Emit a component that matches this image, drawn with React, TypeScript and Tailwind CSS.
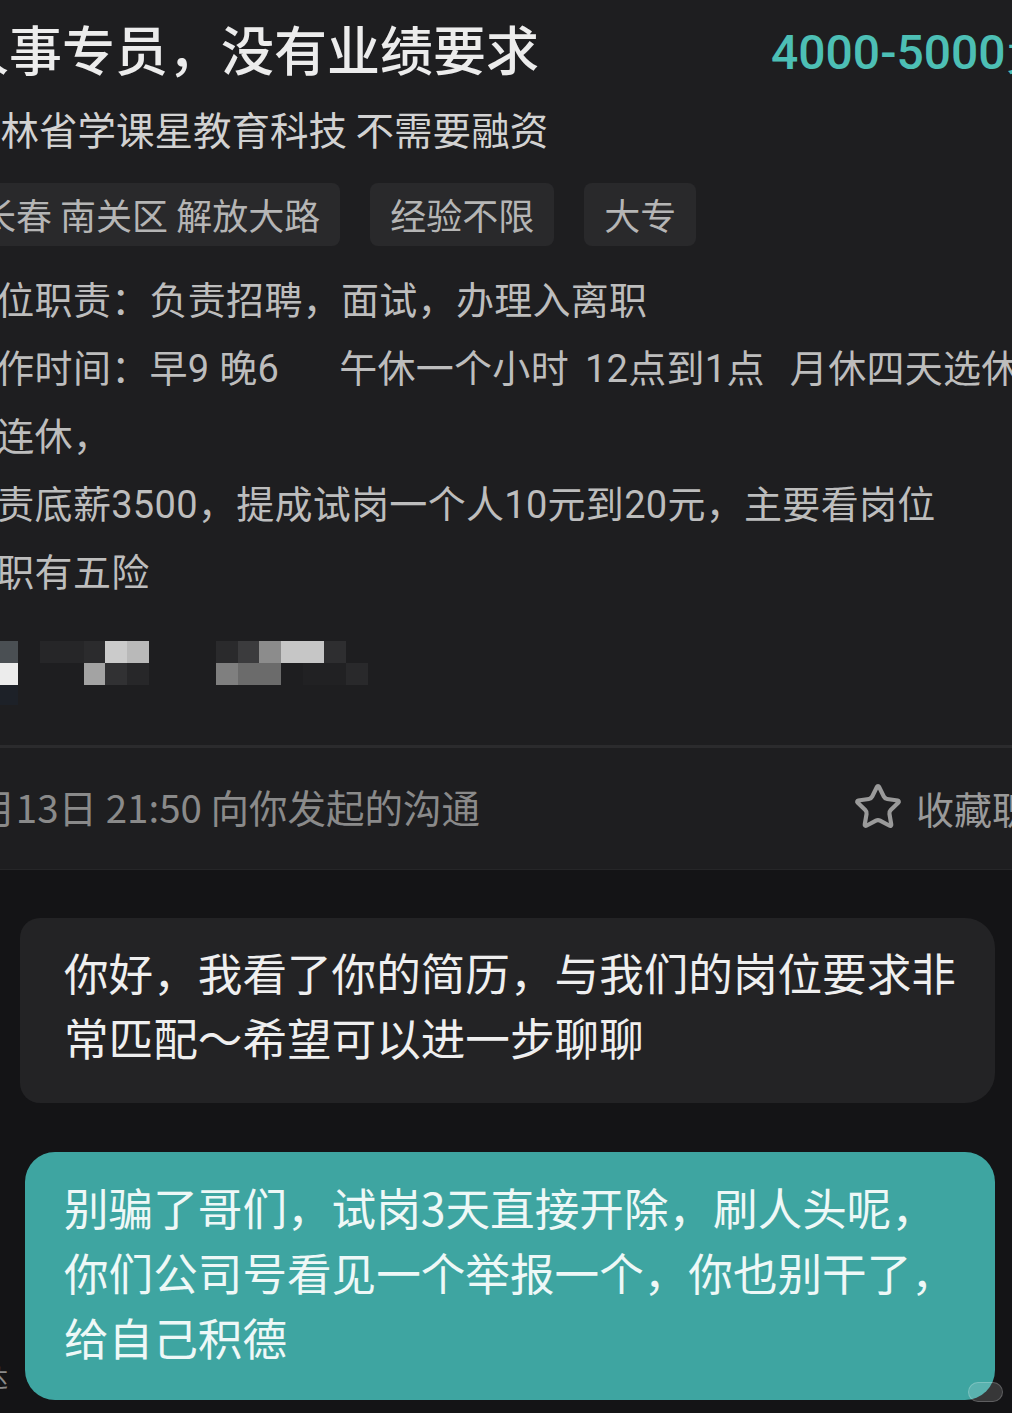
import { Star } from "lucide-react";

const cjk = "font-['Noto_Sans_CJK_SC',sans-serif]";

const blocks: [number, number, number, number, string][] = [
  [0, 0, 18, 22, "#4a4f53"],
  [40, 0, 44, 22, "#262628"],
  [84, 0, 21, 22, "#2b2b2d"],
  [105, 0, 22, 22, "#cbcbcb"],
  [127, 0, 22, 22, "#b9b9b9"],
  [216, 0, 22, 22, "#2a2a2c"],
  [238, 0, 21, 22, "#3b3b3d"],
  [259, 0, 22, 22, "#8c8c8c"],
  [281, 0, 43, 22, "#c6c6c6"],
  [324, 0, 22, 22, "#2e2e30"],
  [0, 22, 18, 22, "#ececec"],
  [84, 22, 21, 22, "#a3a3a3"],
  [105, 22, 22, 22, "#313133"],
  [127, 22, 22, 22, "#272729"],
  [216, 22, 22, 22, "#7f7f7f"],
  [238, 22, 43, 22, "#6b6b6b"],
  [303, 22, 43, 22, "#212123"],
  [346, 22, 22, 22, "#29292b"],
  [0, 44, 18, 20, "#1d2128"],
];

// blurred contact info, drawn as a mosaic
function Mosaic() {
  return (
    <svg width="380" height="64" viewBox="0 0 380 64" className="block">
      {blocks.map(([x, y, w, h, c], i) => (
        <rect key={i} x={x} y={y} width={w} height={h} fill={c} />
      ))}
    </svg>
  );
}

const tags = ["长春 南关区 解放大路", "经验不限", "大专"];

const lines = [
  "岗位职责：负责招聘，面试，办理入离职",
  "可连休，",
  "负责底薪3500，提成试岗一个人10元到20元，主要看岗位",
  "入职有五险",
];

export default function App() {
  return (
    <div className={`w-[1012px] h-[1413px] overflow-hidden bg-[#141416] ${cjk}`}>
      {/* job header */}
      <section className="h-[870px] bg-[#1e1e20] border-b border-[#262628]">
        <div className="-ml-[44px] w-[1160px] whitespace-nowrap">
          <div className="flex items-start pt-[17px]">
            <h1 className="w-[817px] text-[53px] leading-[62px] font-medium text-[#ececec]">
              人事专员，没有业绩要求
            </h1>
            <div className="-ml-[2px] font-['Roboto',sans-serif] text-[48px] leading-[72px] font-medium text-[#4dbfb5]">
              4000-5000元
            </div>
          </div>

          <p className="mt-[14px] ml-[6px] text-[38.5px] leading-[50px] text-[#d2d2d2]">
            吉林省学课星教育科技 不需要融资
          </p>

          <div className="mt-[30px] ml-[4px] flex gap-[30px]">
            {tags.map((t) => (
              <span
                key={t}
                className="h-[63px] px-[20px] rounded-[8px] bg-[#29292b] text-[36px] leading-[63px] text-[#b5b5b5] whitespace-pre"
              >
                {t}
              </span>
            ))}
          </div>

          <div className="mt-[21px] ml-[2px] font-['Roboto','Noto_Sans_CJK_SC',sans-serif] text-[38px] tracking-[0.3px] leading-[68px] text-[#bdbdbd]">
            <p>{lines[0]}</p>
            <p className="flex">
              <span>工作时间：早9 晚6</span>
              <span className="ml-[60px]">午休一个小时</span>
              <span className="ml-[16px]">12点到1点</span>
              <span className="ml-[25px]">月休四天选休</span>
            </p>
            {lines.slice(1).map((l) => (
              <p key={l}>{l}</p>
            ))}
          </div>

          <div className="mt-[34px] ml-[44px]">
            <Mosaic />
          </div>
        </div>

        <div className="mt-[40px] h-[3px] bg-[#2b2b2d]" />

        <div className="-ml-[44px] w-[1160px] h-[122px] pb-[4px] flex items-center whitespace-nowrap">
          <span className="w-[897px] text-[38.5px] text-[#8a8a8a]">5月13日 21:50 向你发起的沟通</span>
          <Star className="w-[50px] h-[50px] text-[#9a9a9a]" strokeWidth={2} />
          <span className="ml-[13px] text-[38px] text-[#9a9a9a]">收藏职位</span>
        </div>
      </section>

      {/* chat */}
      <section className="pt-[48px] pr-[17px] flex flex-col gap-[49px]">
        <div className="ml-[20px] rounded-[30px] rounded-l-[20px] bg-[#232325] pl-[44px] pr-[20px] pt-[21px] pb-[34px] text-[44.6px] leading-[65px] text-[#efefef]">
          你好，我看了你的简历，与我们的岗位要求非常匹配～希望可以进一步聊聊
        </div>

        <div className="flex items-end">
          <div className="w-[25px] h-[248px] overflow-hidden flex items-end justify-end pb-[8px]">
            <span className="mr-[17px] shrink-0 text-[24px] leading-[30px] text-[#8a8a8a] whitespace-nowrap">送达</span>
          </div>
          <div className="relative flex-1 h-[248px] rounded-[30px] bg-[#3ea5a1] pl-[39px] pr-[20px] pt-[22px] text-[44.6px] leading-[65px] text-[#eef8f7]">
            别骗了哥们，试岗3天直接开除，刷人头呢，你们公司号看见一个举报一个，你也别干了，给自己积德
            <span className="absolute right-[-8px] bottom-[-2px] w-[35px] h-[20px] rounded-full bg-white/15 border border-white/20" />
          </div>
        </div>
      </section>
    </div>
  );
}
